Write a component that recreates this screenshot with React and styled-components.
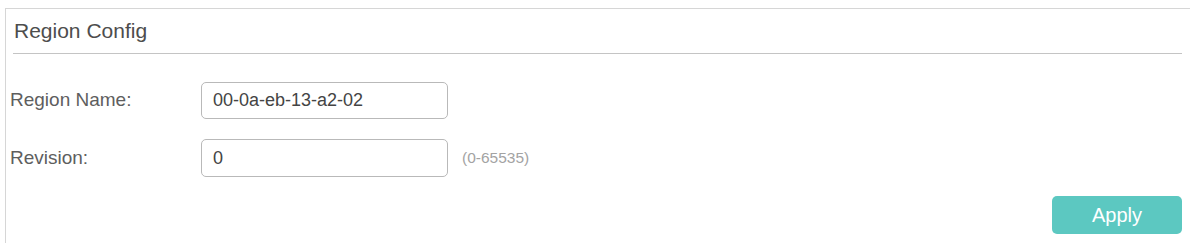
import React from "react";
import styled, { createGlobalStyle } from "styled-components";

const GlobalStyle = createGlobalStyle`
  html, body { margin: 0; padding: 0; background: #ffffff; }
  body { font-family: "Liberation Sans", Arial, sans-serif; overflow: hidden; }
  * { box-sizing: border-box; }
`;

const Panel = styled.section`
  margin: 8px 0 0 5px;
  border-top: 1px solid #d6d6d6;
  border-left: 1px solid #d6d6d6;
  min-height: 240px;
`;

const Header = styled.div`
  display: flex;
  align-items: center;
  height: 45px;
  margin: 0 8px 0 7px;
  padding-left: 1px;
  border-bottom: 1px solid #c4c4c4;
`;

const Title = styled.h2`
  margin: 0;
  font-size: 21px;
  font-weight: normal;
  color: #4d4d4d;
`;

const Form = styled.div`
  display: flex;
  flex-direction: column;
  gap: 20px;
  padding: 27px 8px 0 4px;
`;

const Row = styled.div`
  display: flex;
  align-items: center;
  height: 38px;
`;

const Label = styled.label`
  width: 191px;
  font-size: 19px;
  color: #5e5e5e;
`;

const Input = styled.input`
  width: 247px;
  height: ${(p) => (p.$tall ? 38 : 37)}px;
  padding: 0 11px;
  border: 1px solid #b9b9b9;
  border-radius: 5px;
  font-family: "Liberation Sans", Arial, sans-serif;
  font-size: 18px;
  color: #444444;
  background: #fff;
  outline: none;
`;

const Hint = styled.span`
  margin-left: 14px;
  font-size: 15.5px;
  color: #a3a3a3;
`;

const Footer = styled.div`
  display: flex;
  justify-content: flex-end;
  padding: 19px 8px 0 0;
`;

const ApplyButton = styled.button`
  width: 130px;
  height: 38px;
  border: none;
  border-radius: 5px;
  background: #5cc8c1;
  color: #ffffff;
  font-family: "Liberation Sans", Arial, sans-serif;
  font-size: 20px;
  cursor: pointer;
`;

export default function App() {
  return (
    <>
      <GlobalStyle />
      <Panel>
        <Header>
          <Title>Region Config</Title>
        </Header>
        <Form>
          <Row>
            <Label>Region Name:</Label>
            <Input defaultValue="00-0a-eb-13-a2-02" />
          </Row>
          <Row>
            <Label>Revision:</Label>
            <Input $tall defaultValue="0" />
            <Hint>(0-65535)</Hint>
          </Row>
        </Form>
        <Footer>
          <ApplyButton>Apply</ApplyButton>
        </Footer>
      </Panel>
    </>
  );
}
